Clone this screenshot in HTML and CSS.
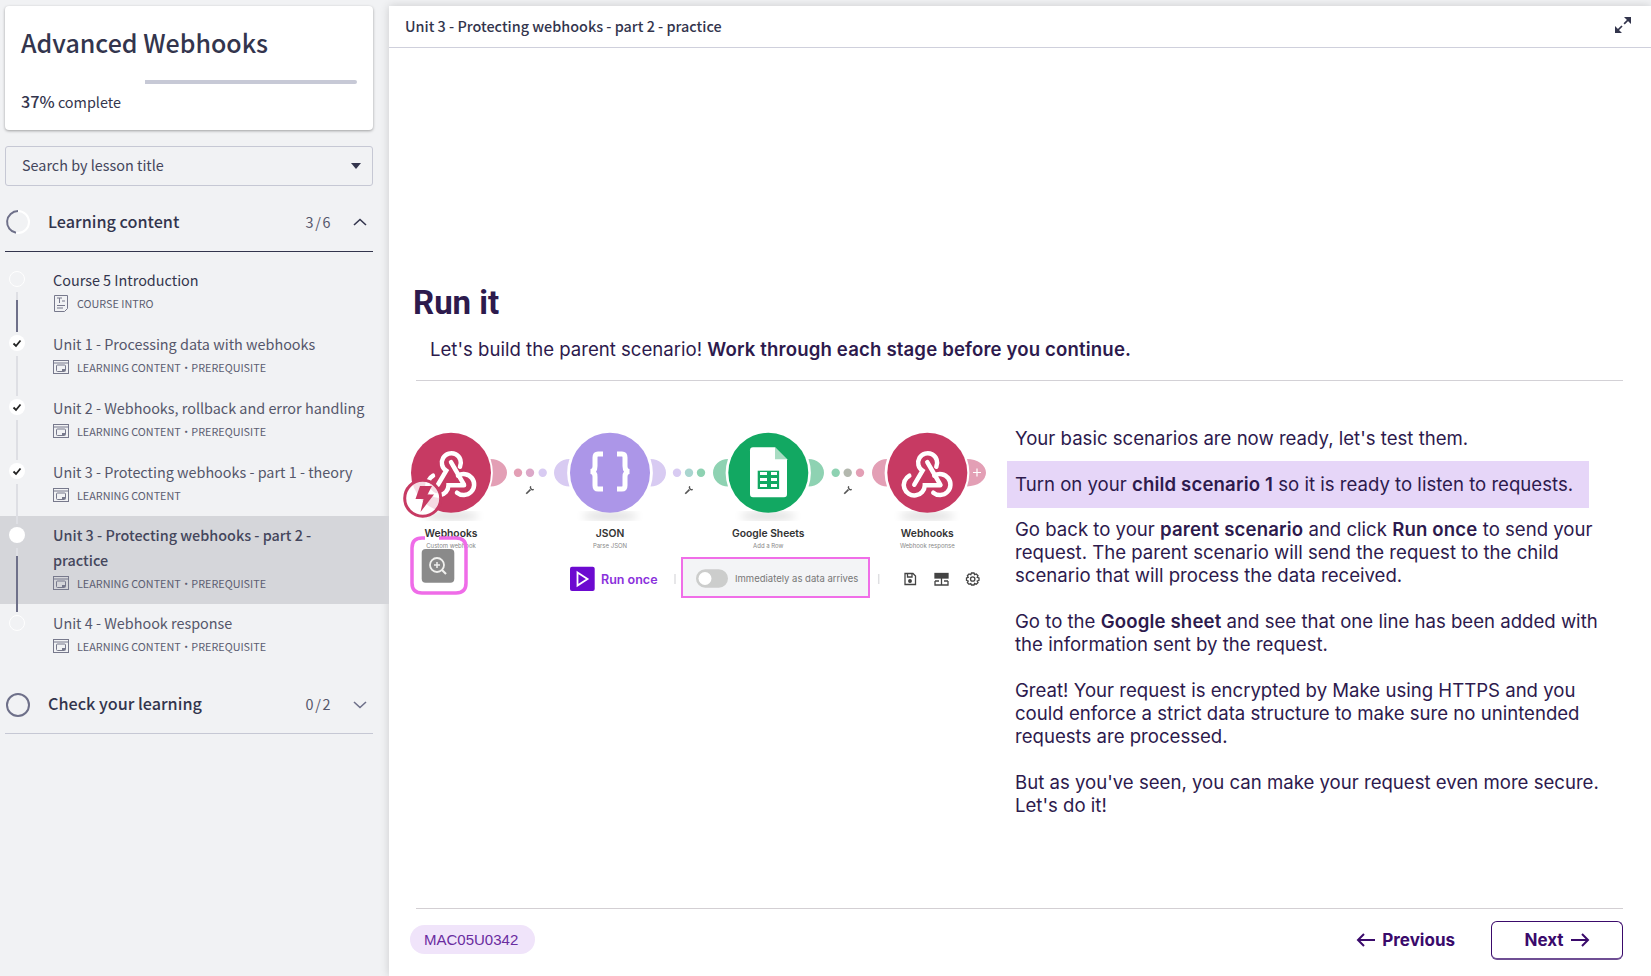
FILE: index.html
```html
<!DOCTYPE html>
<html lang="en">
<head>
    <meta charset="UTF-8">
    <meta name="viewport" content="width=device-width, initial-scale=1.0">
    <title>Advanced Webhooks</title>
    <link rel="stylesheet" href="styles.css">
</head>
<body>
    <svg class="defs" width="0" height="0">
        <symbol id="icon-content" viewBox="0 0 16 14">
            <rect x="0.5" y="0.5" width="15" height="13" fill="none" stroke="#77798c"/>
            <path d="M0.5 3H15.5" stroke="#77798c"/>
            <rect x="3.5" y="5" width="9" height="6.5" rx="1" fill="none" stroke="#77798c"/>
            <rect x="9" y="9" width="3" height="2" fill="#77798c"/>
        </symbol>
        <symbol id="icon-check" viewBox="0 0 16 16">
            <path d="M4.500 8.500L7 11L11.500 5.500" fill="none" stroke="#222" stroke-width="1.800"/>
        </symbol>
        <symbol id="icon-hook" viewBox="-40 -40 80 80">
            <g fill="none" stroke="#fff" stroke-width="4.500" stroke-linecap="round">
                <path d="M-13 12L-4.800 -2A9.500 9.500 0 1 1 9 -6"/>
                <path d="M0 -10.500L13 12"/>
                <path d="M7 3A10.500 10.500 0 1 1 6 20"/>
                <path d="M-18 3A10.500 10.500 0 1 0 -2.500 12.500H13"/>
            </g>
        </symbol>
        <symbol id="icon-wrench" viewBox="0 0 12 12">
            <path d="M1.500 10.500L6.500 5.500" fill="none" stroke="#555" stroke-width="2"/>
            <path d="M6.800 1.500A2.800 2.800 0 0 0 10.500 5.300" fill="none" stroke="#555" stroke-width="1.700"/>
        </symbol>
        <symbol id="icon-left" viewBox="0 0 20 14">
            <path d="M19 7H2M8 1L2 7L8 13" fill="none" stroke="#3a0a6b" stroke-width="2"/>
        </symbol>
        <symbol id="icon-right" viewBox="0 0 20 14">
            <path d="M1 7H18M12 1L18 7L12 13" fill="none" stroke="#3a0a6b" stroke-width="2"/>
        </symbol>
        <filter id="soft"><feGaussianBlur stdDeviation="4"/></filter>
    </svg>

    <!-- Sidebar -->
    <aside class="sidebar">
        <div class="course-card">
            <h1>Advanced Webhooks</h1>
            <div class="progress"><div class="progress-fill" style="width: 37%;"></div></div>
            <p class="progress-text"><b>37%</b> complete</p>
        </div>

        <div class="lesson-search">
            <span>Search by lesson title</span>
            <span class="caret"></span>
        </div>

        <div class="section-head open">
            <svg class="ring" width="26" height="26" viewBox="0 0 26 26">
                <circle cx="13" cy="13" r="11" fill="none" stroke="#fff" stroke-width="2"/>
                <path d="M13 2A11 11 0 0 0 11 23.800" fill="none" stroke="#6e7089" stroke-width="2"/>
            </svg>
            <span class="section-title">Learning content</span>
            <span class="section-count">3/6</span>
            <svg class="chevron" width="14" height="8" viewBox="0 0 14 8"><path d="M1 7L7 1.500L13 7" fill="none" stroke="#33354d" stroke-width="1.600"/></svg>
        </div>

        <ul class="lessons">
            <li class="lesson intro">
                <span class="rail"><span class="rail-done"></span></span>
                <span class="bullet empty"></span>
                <div class="lesson-title">Course 5 Introduction</div>
                <div class="lesson-meta">
                    <svg width="16" height="17" viewBox="0 0 16 17">
                        <path d="M1.500 0.500H14.500V13.500L11.500 16.500H1.500Z" fill="none" stroke="#77798c"/>
                        <path d="M4 3H9M6.500 3V8M9 6H12M4 10.500H12M4 13H10" fill="none" stroke="#77798c"/>
                    </svg>
                    <span>COURSE INTRO</span>
                </div>
            </li>
            <li class="lesson">
                <span class="rail"></span>
                <span class="bullet"><svg width="16" height="16"><use href="#icon-check"/></svg></span>
                <div class="lesson-title">Unit 1 - Processing data with webhooks</div>
                <div class="lesson-meta"><svg width="16" height="14"><use href="#icon-content"/></svg><span>LEARNING CONTENT <span class="dot">·</span> PREREQUISITE</span></div>
            </li>
            <li class="lesson">
                <span class="rail"></span>
                <span class="bullet"><svg width="16" height="16"><use href="#icon-check"/></svg></span>
                <div class="lesson-title">Unit 2 - Webhooks, rollback and error handling</div>
                <div class="lesson-meta"><svg width="16" height="14"><use href="#icon-content"/></svg><span>LEARNING CONTENT <span class="dot">·</span> PREREQUISITE</span></div>
            </li>
            <li class="lesson">
                <span class="rail"></span>
                <span class="bullet"><svg width="16" height="16"><use href="#icon-check"/></svg></span>
                <div class="lesson-title">Unit 3 - Protecting webhooks - part 1 - theory</div>
                <div class="lesson-meta"><svg width="16" height="14"><use href="#icon-content"/></svg><span>LEARNING CONTENT</span></div>
            </li>
            <li class="lesson current">
                <span class="rail"><span class="rail-done"></span></span>
                <span class="bullet"></span>
                <div class="lesson-title">Unit 3 - Protecting webhooks - part 2 - practice</div>
                <div class="lesson-meta"><svg width="16" height="14"><use href="#icon-content"/></svg><span>LEARNING CONTENT <span class="dot">·</span> PREREQUISITE</span></div>
            </li>
            <li class="lesson last">
                <span class="bullet empty"></span>
                <div class="lesson-title">Unit 4 - Webhook response</div>
                <div class="lesson-meta"><svg width="16" height="14"><use href="#icon-content"/></svg><span>LEARNING CONTENT <span class="dot">·</span> PREREQUISITE</span></div>
            </li>
        </ul>

        <div class="section-head">
            <svg class="ring" width="26" height="26" viewBox="0 0 26 26">
                <circle cx="13" cy="13" r="11" fill="none" stroke="#6e7089" stroke-width="2"/>
            </svg>
            <span class="section-title">Check your learning</span>
            <span class="section-count">0/2</span>
            <svg class="chevron" width="14" height="8" viewBox="0 0 14 8"><path d="M1 1L7 6.500L13 1" fill="none" stroke="#6e7089" stroke-width="1.600"/></svg>
        </div>
    </aside>

    <!-- Lesson -->
    <main class="main">
        <header class="topbar">
            <span>Unit 3 - Protecting webhooks - part 2 - practice</span>
            <svg width="18" height="18" viewBox="0 0 18 18">
                <path d="M2 16L16 2" stroke="#33354d" stroke-width="1.700" stroke-dasharray="8.500 3 8.500"/>
                <path d="M10 1H17V8Z M1 10V17H8Z" fill="#33354d"/>
            </svg>
        </header>

        <section class="lesson-body">
            <h2>Run it</h2>
            <p class="intro-text">Let's build the parent scenario! <b>Work through each stage before you continue.</b></p>
            <hr>
            <div class="columns">
                <svg class="scenario" width="600" height="190" viewBox="0 0 600 190">
                    <!-- shadows -->
                    <g fill="#000" opacity="0.14" filter="url(#soft)">
                        <ellipse cx="51" cy="96" rx="28" ry="4"/>
                        <ellipse cx="210" cy="96" rx="28" ry="4"/>
                        <ellipse cx="368" cy="96" rx="28" ry="4"/>
                        <ellipse cx="527" cy="96" rx="28" ry="4"/>
                    </g>

                    <!-- connectors -->
                    <path d="M90.500 39A16.500 13.700 0 0 1 90.500 66.400A42 42 0 0 0 90.500 39Z" fill="#e39fb5"/>
                    <path d="M169.500 39A15.500 13.700 0 0 0 169.500 66.400A42 42 0 0 1 169.500 39Z" fill="#d8cbf2"/>
                    <path d="M250.500 39A15.500 13.700 0 0 1 250.500 66.400A42 42 0 0 0 250.500 39Z" fill="#d8cbf2"/>
                    <path d="M328 39A15 13.700 0 0 0 328 66.400A42 42 0 0 1 328 39Z" fill="#8ed2b2"/>
                    <path d="M408.500 39A15.500 13.700 0 0 1 408.500 66.400A42 42 0 0 0 408.500 39Z" fill="#8ed2b2"/>
                    <path d="M487 39A15 13.700 0 0 0 487 66.400A42 42 0 0 1 487 39Z" fill="#e39fb5"/>
                    <path d="M567 39A19 13.700 0 0 1 567 66.400A42 42 0 0 0 567 39Z" fill="#e39fb5"/>
                    <path d="M577 48.500V56.500M573 52.500H581" stroke="#fff" stroke-width="1.200"/>

                    <circle cx="118" cy="52.700" r="4.200" fill="#e39fb5"/>
                    <circle cx="130" cy="52.700" r="4.200" fill="#dca8c8"/>
                    <circle cx="142.700" cy="52.700" r="4.200" fill="#d8cbf2"/>
                    <circle cx="277" cy="52.700" r="4.200" fill="#d8cbf2"/>
                    <circle cx="289" cy="52.700" r="4.200" fill="#a9d5cf"/>
                    <circle cx="301" cy="52.700" r="4.200" fill="#8ed2b2"/>
                    <circle cx="435.700" cy="52.700" r="4.200" fill="#8ed2b2"/>
                    <circle cx="447.700" cy="52.700" r="4.200" fill="#b3b8ae"/>
                    <circle cx="460" cy="52.700" r="4.200" fill="#e39fb5"/>
                    <use href="#icon-wrench" x="125" y="65" width="10" height="10"/>
                    <use href="#icon-wrench" x="284" y="65" width="10" height="10"/>
                    <use href="#icon-wrench" x="443" y="65" width="10" height="10"/>

                    <!-- webhooks trigger -->
                    <circle cx="51" cy="52.700" r="40" fill="#c73a63"/>
                    <use href="#icon-hook" x="11" y="12.700" width="80" height="80"/>
                    <circle cx="22.700" cy="78.300" r="18" fill="#fff" fill-opacity="0.82" stroke="#c73a63" stroke-width="3"/>
                    <path d="M20 66H32L27.500 74.500H34L20.500 92L23.500 79H15.500Z" fill="#c73a63"/>

                    <!-- json -->
                    <circle cx="210" cy="52.700" r="40" fill="#ac96e8"/>
                    <g fill="none" stroke="#fff" stroke-width="5">
                        <path d="M203 34H198Q195 34 195 37.500V46Q195 51.500 190.500 51.500Q195 51.500 195 57V65.500Q195 69 198 69H203"/>
                        <path d="M217 34H222Q225 34 225 37.500V46Q225 51.500 229.500 51.500Q225 51.500 225 57V65.500Q225 69 222 69H217"/>
                    </g>

                    <!-- sheets -->
                    <circle cx="368.300" cy="52.700" r="40" fill="#12a862"/>
                    <path d="M353 27.300H375L387 39.300V74Q387 77.300 384 77.300H353Q350 77.300 350 74V30.300Q350 27.300 353 27.300Z" fill="#fff"/>
                    <path d="M375 27.300L387 39.300H375Z" fill="#a8dcc2"/>
                    <rect x="357.700" y="50.700" width="21.400" height="18.300" fill="#12a862"/>
                    <path d="M360 53.500H367M371 53.500H377M360 59.500H367M371 59.500H377M360 65.500H367M371 65.500H377" stroke="#fff" stroke-width="3"/>

                    <!-- webhooks response -->
                    <circle cx="527.300" cy="52.700" r="40" fill="#c73a63"/>
                    <use href="#icon-hook" x="487.300" y="12.700" width="80" height="80"/>

                    <!-- labels -->
                    <g class="module-name">
                        <text x="51" y="117">Webhooks</text>
                        <text x="210" y="117">JSON</text>
                        <text x="368.300" y="117">Google Sheets</text>
                        <text x="527.300" y="117">Webhooks</text>
                    </g>
                    <g class="module-sub">
                        <text x="51" y="128">Custom webhook</text>
                        <text x="210" y="128">Parse JSON</text>
                        <text x="368.300" y="128">Add a Row</text>
                        <text x="527.300" y="128">Webhook response</text>
                    </g>

                    <!-- zoom button -->
                    <rect x="21.700" y="129" width="32.600" height="33.700" rx="4" fill="#8a8a8a"/>
                    <circle cx="37" cy="145" r="7" fill="none" stroke="#f0f0ee" stroke-width="1.800"/>
                    <path d="M34 145H40M37 142V148" stroke="#f0f0ee" stroke-width="1.500"/>
                    <path d="M42 150L46 154" stroke="#f0f0ee" stroke-width="2.200"/>
                    <path d="M25 118H22Q12 118 12 128V163Q12 173 22 173H56Q66 173 66 163V128Q66 118 56 118H39" fill="none" stroke="#ef6ce8" stroke-width="3.500"/>

                    <!-- run once -->
                    <rect x="170" y="146.700" width="24.700" height="24.300" rx="2" fill="#6c0ad0"/>
                    <path d="M177.500 152.500L187.500 159L177.500 165.500Z" fill="none" stroke="#fff" stroke-width="1.800"/>
                    <text class="run-once" x="201" y="163.500">Run once</text>
                    <path d="M275 154V164" stroke="#dfdfe2" stroke-width="1.500"/>

                    <!-- scheduling toggle -->
                    <rect x="282" y="138" width="187" height="39" fill="#f3f4f6" stroke="#f06ee8" stroke-width="2"/>
                    <rect x="296" y="149.300" width="32" height="18.400" rx="9.200" fill="#cccdcc"/>
                    <circle cx="305" cy="158.500" r="6.500" fill="#fff"/>
                    <text class="toggle-label" x="335" y="162">Immediately as data arrives</text>
                    <path d="M478.700 154V164" stroke="#dfdfe2" stroke-width="1.500"/>

                    <!-- toolbar icons -->
                    <g fill="none" stroke="#444" stroke-width="1.300">
                        <path d="M505 153.500H513L515.500 156V164.500H505Z"/>
                        <path d="M507.500 153.500V157H512V153.500"/>
                        <circle cx="510" cy="161" r="1.300" fill="#444"/>
                        <rect x="535" y="153.500" width="13" height="4.500" fill="#444"/>
                        <path d="M535 161H539M544 161H548M541.500 158V165M535 161V165H548V161"/>
                        <circle cx="572.700" cy="159" r="2.200"/>
                        <path d="M571.500 153H574L574.600 154.700L576.300 154L578 155.700L577.200 157.300L579 158V160.300L577.200 161L578 162.700L576.300 164.300L574.600 163.500L574 165H571.500L570.800 163.500L569 164.300L567.400 162.700L568.200 161L566.500 160.300V158L568.200 157.300L567.400 155.700L569 154L570.800 154.700Z"/>
                    </g>
                </svg>

                <div class="lesson-text">
                    <p>Your basic scenarios are now ready, let's test them.</p>
                    <p class="highlight">Turn on your <b>child scenario 1</b> so it is ready to listen to requests.</p>
                    <p>Go back to your <b>parent scenario</b> and click <b>Run once</b> to send your request. The parent scenario will send the request to the child scenario that will process the data received.</p>
                    <p>Go to the <b>Google sheet</b> and see that one line has been added with the information sent by the request.</p>
                    <p>Great! Your request is encrypted by Make using HTTPS and you could enforce a strict data structure to make sure no unintended requests are processed.</p>
                    <p>But as you've seen, you can make your request even more secure. Let's do it!</p>
                </div>
            </div>
        </section>

        <footer class="lesson-footer">
            <span class="lesson-code">MAC05U0342</span>
            <div class="nav-buttons">
                <a class="nav-prev" href="#"><svg width="20" height="14"><use href="#icon-left"/></svg>Previous</a>
                <a class="nav-next" href="#">Next<svg width="20" height="14"><use href="#icon-right"/></svg></a>
            </div>
        </footer>
    </main>
</body>
</html>
```

FILE: styles.css
```css
html, body {
    height: 100%;
}
body {
    margin: 0;
    display: flex;
    height: 100vh;
    overflow: hidden;
    background-color: #f1f2f4;
    font-family: "Noto Sans CJK SC", "Noto Sans", sans-serif;
    color: #33354d;
}
.defs {
    position: absolute;
}

/* Sidebar */
.sidebar {
    width: 368px;
    flex-shrink: 0;
    padding: 6px 16px 0 5px;
}
.course-card {
    height: 124px;
    box-sizing: border-box;
    padding: 19px 16px 0;
    background-color: #fff;
    border-radius: 4px;
    box-shadow: 0 1px 3px rgba(0, 0, 0, 0.35);
}
.course-card h1 {
    margin: 0;
    font-size: 25px;
    line-height: 34px;
    font-weight: 500;
}
.progress {
    height: 4px;
    margin-top: 21px;
    background-color: #c7c9d6;
    border-radius: 2px;
}
.progress-fill {
    height: 100%;
    background-color: #fff;
}
.progress-text {
    margin: 5px 0 0;
    font-size: 14.400px;
    line-height: 24px;
}
.progress-text b {
    font-size: 16.200px;
    font-weight: 500;
    letter-spacing: 0;
}
.lesson-search {
    display: flex;
    align-items: center;
    justify-content: space-between;
    height: 40px;
    box-sizing: border-box;
    margin-top: 16px;
    padding: 0 11px 3px 16px;
    border: 1px solid #c6c8d4;
    border-radius: 3px;
    font-size: 14.400px;
    color: #44465c;
}
.caret {
    width: 0;
    height: 0;
    margin-top: 3px;
    border-left: 5px solid transparent;
    border-right: 5px solid transparent;
    border-top: 6px solid #33354d;
}
.section-head {
    display: flex;
    align-items: center;
    height: 57px;
    box-sizing: border-box;
    padding-bottom: 1px;
    border-bottom: 1px solid #c6c8d4;
}
.section-head.open {
    height: 56px;
    margin-top: 10px;
    padding-bottom: 3px;
    border-bottom-color: #33354d;
}
.ring {
    flex-shrink: 0;
}
.section-title {
    flex: 1;
    margin-left: 17px;
    padding-bottom: 3px;
    font-size: 16.200px;
    font-weight: 500;
}
.section-count {
    margin-right: 21px;
    padding-bottom: 2px;
    font-size: 14.400px;
    letter-spacing: 1.600px;
    color: #55576b;
}
.chevron {
    margin-right: 6px;
}
.lessons {
    list-style: none;
    margin: 9px -16px 9px -5px;
    padding: 0;
}
.lesson {
    position: relative;
    padding: 6px 23px 14px 53px;
    color: #55576b;
}
.lesson.intro {
    color: #33354d;
}
.lesson.current {
    padding-bottom: 13px;
    margin-top: -1px;
    background-color: #d5d6da;
    color: #44465c;
}
.lesson.current .lesson-title {
    font-weight: 500;
}
.lesson-title {
    font-size: 14.400px;
    line-height: 25px;
}
.lesson-meta {
    display: flex;
    align-items: center;
    gap: 8px;
    height: 16px;
    margin-top: 3px;
    font-size: 10.800px;
    color: #5c5e72;
}
.dot {
    margin: 0 -2.500px;
}
.bullet {
    position: absolute;
    left: 9px;
    top: 10px;
    width: 16px;
    height: 16px;
    border-radius: 50%;
    background-color: #fff;
}
.bullet svg {
    display: block;
}
.lesson.current .bullet, .lesson.last .bullet {
    top: 11px;
}
.bullet.empty {
    box-sizing: border-box;
    background-color: transparent;
    border: 1px solid #fff;
}
.rail {
    position: absolute;
    left: 16px;
    top: 31px;
    width: 2px;
    height: 40px;
    background-color: #dedfe4;
    z-index: 1;
}
.lesson.current .rail {
    top: 32px;
    height: 64px;
}
.rail-done {
    position: absolute;
    left: 0;
    right: 0;
    bottom: 0;
    height: 32px;
    background-color: #6e7089;
}
.lesson.current .rail-done {
    height: 56px;
}

/* Main panel */
.main {
    flex: 1;
    display: flex;
    flex-direction: column;
    min-width: 0;
    margin-top: 6px;
    background-color: #fff;
    box-shadow: 0 0 9px rgba(0, 0, 0, 0.16);
    color: #2d1a4d;
}
.topbar {
    display: flex;
    align-items: center;
    justify-content: space-between;
    height: 42px;
    flex-shrink: 0;
    padding: 0 19px 3px 16px;
    box-sizing: border-box;
    border-bottom: 1px solid #cfd0dc;
    font-size: 14.400px;
    font-weight: 500;
    color: #33354d;
}
.lesson-body {
    flex: 1;
    padding: 235px 28px 0 11px;
}
.lesson-body h2 {
    margin: 0 0 0 13px;
    font-family: Roboto, sans-serif;
    font-size: 33px;
    line-height: 40px;
    font-weight: 700;
}
.intro-text {
    margin: 15px 0 0 30px;
    font-family: Inter, sans-serif;
    font-size: 18.600px;
    line-height: 23px;
}
.lesson-body hr {
    height: 1px;
    margin: 19px 0 0 16px;
    border: 0;
    background-color: #d3d1d6;
}
.columns {
    display: grid;
    grid-template-columns: 600px 1fr;
    column-gap: 15px;
    margin-top: 39px;
}
.scenario {
    display: block;
}
.lesson-text {
    padding-top: 7px;
    font-family: Inter, sans-serif;
    font-size: 18.600px;
    line-height: 23px;
}
.lesson-text p {
    margin: 0 0 23px;
}
.lesson-text .highlight {
    margin: -12px 34px 10px -8px;
    padding: 12px 8px;
    background-color: #e6d6f8;
}
b {
    font-weight: 600;
    letter-spacing: 0.150px;
}

/* Diagram labels */
.module-name text {
    font-family: Inter, sans-serif;
    font-size: 10.300px;
    font-weight: 600;
    text-anchor: middle;
    fill: #333;
}
.module-sub text {
    font-family: Inter, sans-serif;
    font-size: 6px;
    text-anchor: middle;
    fill: #888;
}
.run-once {
    font-family: Inter, sans-serif;
    font-size: 12.500px;
    font-weight: 600;
    fill: #8a31dc;
}
.toggle-label {
    font-family: Inter, sans-serif;
    font-size: 9.500px;
    fill: #777;
}

/* Footer */
.lesson-footer {
    display: flex;
    align-items: center;
    justify-content: space-between;
    height: 68px;
    flex-shrink: 0;
    box-sizing: border-box;
    margin: 0 28px 0 27px;
    padding-bottom: 6px;
    border-top: 1px solid #d3cfd3;
}
.lesson-code {
    margin-left: -6px;
    padding: 0 17px 0 14px;
    height: 29px;
    line-height: 29px;
    border-radius: 15px;
    background-color: #f0e4fa;
    font-family: "Liberation Sans", sans-serif;
    font-size: 15px;
    color: #6a2ca0;
}
.nav-buttons {
    display: flex;
    align-items: center;
    gap: 36px;
}
.nav-buttons a {
    display: flex;
    align-items: center;
    justify-content: center;
    gap: 6px;
    font-family: Inter, sans-serif;
    font-size: 17px;
    font-weight: 700;
    text-decoration: none;
    color: #3a0a6b;
}
.nav-next {
    width: 132px;
    height: 39px;
    margin-top: 2px;
    box-sizing: border-box;
    border: 1px solid #3a0a6b;
    border-bottom: 2px solid #6f4f94;
    border-radius: 6px;
}
```
